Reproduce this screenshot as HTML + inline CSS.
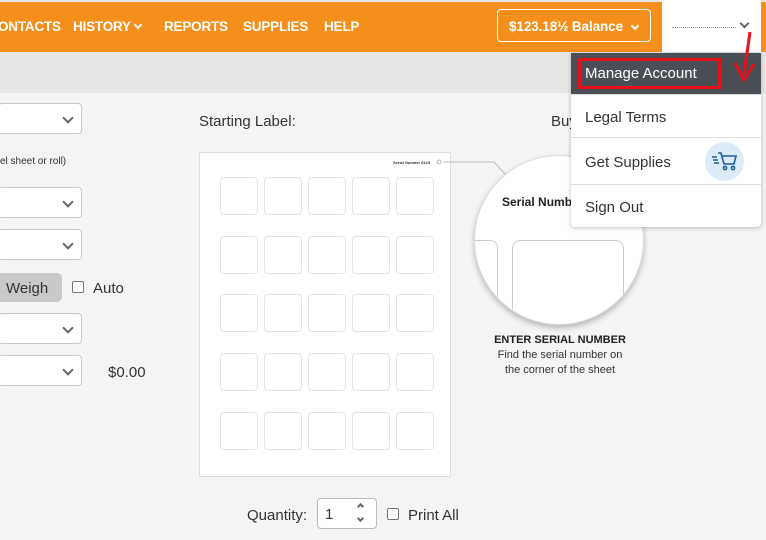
<!DOCTYPE html>
<html><head><meta charset="utf-8"><style>
*{box-sizing:border-box;margin:0;padding:0}
body{width:766px;height:540px;overflow:hidden;background:#f3f4f4;font-family:"Liberation Sans",sans-serif;color:#333;position:relative}
.a{position:absolute}
.top{left:0;top:0;width:766px;height:2px;background:#e5e5e5}
.nav{left:0;top:2px;width:766px;height:50px;background:#f58f1b}
.nt{color:#fff;font-size:13.5px;font-weight:bold;top:19px;letter-spacing:-.2px}
.gray{left:0;top:52px;width:766px;height:41px;background:#e6e6e6}
.sel{background:#fff;border:1px solid #c8c8c8;border-radius:4px;width:84px;height:31px;left:-2px}
.chev{width:8px;height:8px;border-right:2px solid #666;border-bottom:2px solid #666;transform:rotate(45deg)}
.cb{width:12px;height:12px;border:1.5px solid #777;border-radius:2px;background:#fff}
.lab{width:38px;height:38px;border:1px solid #e4e4e4;border-radius:4px;background:#fff}
.menu{left:571px;top:53px;width:190px;height:174px;background:#fff;box-shadow:0 1px 4px rgba(0,0,0,.25);border-radius:0 0 4px 4px}
.mi{left:0;width:190px;font-size:15px;padding-left:14px;border-top:1px solid #ddd}
</style></head><body>
<div class="a top"></div>
<div class="a nav"></div>
<div class="a nt" style="left:-2px">ONTACTS</div>
<div class="a nt" style="left:73px">HISTORY</div>
<div class="a chev" style="left:135px;top:22px;border-color:#fff;width:6px;height:6px"></div>
<div class="a nt" style="left:164px">REPORTS</div>
<div class="a nt" style="left:243px">SUPPLIES</div>
<div class="a nt" style="left:324px">HELP</div>
<div class="a" style="left:497px;top:9px;width:154px;height:33px;border:1px solid #fff;border-radius:4px;color:#fff;font-size:13.5px;font-weight:bold;padding:9px 0 0 11px;white-space:nowrap;letter-spacing:-.1px">$123.18½ Balance</div>
<div class="a chev" style="left:632px;top:23px;border-color:#fff;width:6px;height:6px"></div>
<div class="a" style="left:662px;top:0;width:99px;height:52px;background:#fff"></div>
<div class="a" style="left:672px;top:25px;width:64px;height:3px;border-bottom:1px dotted #999"></div>
<div class="a chev" style="left:741px;top:20px;width:7px;height:7px"></div>
<div class="a gray"></div>

<div class="a sel" style="top:103px"></div><div class="a chev" style="left:64px;top:114px"></div>
<div class="a" style="left:0;top:156px;font-size:10px">el sheet or roll)</div>
<div class="a sel" style="top:187px"></div><div class="a chev" style="left:64px;top:198px"></div>
<div class="a sel" style="top:229px"></div><div class="a chev" style="left:64px;top:240px"></div>
<div class="a" style="left:-10px;top:273px;width:72px;height:29px;background:#c8c8c8;border-radius:5px;font-size:15px;padding:7px 0 0 16px">Weigh</div>
<div class="a cb" style="left:72px;top:281px"></div>
<div class="a" style="left:93px;top:280px;font-size:15px">Auto</div>
<div class="a sel" style="top:313px"></div><div class="a chev" style="left:64px;top:324px"></div>
<div class="a sel" style="top:355px"></div><div class="a chev" style="left:64px;top:366px"></div>
<div class="a" style="left:108px;top:364px;font-size:15px">$0.00</div>

<div class="a" style="left:199px;top:113px;font-size:15px">Starting Label:</div>
<div class="a" style="left:551px;top:113px;font-size:15px">Buy</div>
<div class="a" style="left:199px;top:152px;width:252px;height:325px;background:#fff;border:1px solid #ddd"></div>
<div class="a" style="left:393px;top:160px;font-size:4px;font-weight:bold">Serial Number 8123</div>
<svg class="a" style="left:0;top:0" width="766" height="540"><polyline points="443,162 494,162 506,175" fill="none" stroke="#bbb" stroke-width="1"/><circle cx="439" cy="162" r="2" fill="none" stroke="#bbb"/></svg>
<div class="a" style="left:0;top:0">
<div class="a lab" style="left:220px;top:177px"></div><div class="a lab" style="left:264px;top:177px"></div><div class="a lab" style="left:308px;top:177px"></div><div class="a lab" style="left:352px;top:177px"></div><div class="a lab" style="left:396px;top:177px"></div>
<div class="a lab" style="left:220px;top:236px"></div><div class="a lab" style="left:264px;top:236px"></div><div class="a lab" style="left:308px;top:236px"></div><div class="a lab" style="left:352px;top:236px"></div><div class="a lab" style="left:396px;top:236px"></div>
<div class="a lab" style="left:220px;top:294px"></div><div class="a lab" style="left:264px;top:294px"></div><div class="a lab" style="left:308px;top:294px"></div><div class="a lab" style="left:352px;top:294px"></div><div class="a lab" style="left:396px;top:294px"></div>
<div class="a lab" style="left:220px;top:353px"></div><div class="a lab" style="left:264px;top:353px"></div><div class="a lab" style="left:308px;top:353px"></div><div class="a lab" style="left:352px;top:353px"></div><div class="a lab" style="left:396px;top:353px"></div>
<div class="a lab" style="left:220px;top:412px"></div><div class="a lab" style="left:264px;top:412px"></div><div class="a lab" style="left:308px;top:412px"></div><div class="a lab" style="left:352px;top:412px"></div><div class="a lab" style="left:396px;top:412px"></div>
</div>
<div class="a" style="left:474px;top:155px;width:170px;height:170px;border-radius:50%;background:#fff;border:1px solid #ddd;box-shadow:0 3px 6px rgba(0,0,0,.25);overflow:hidden">
<div class="a" style="left:27px;top:39px;font-size:12px;font-weight:bold;color:#222">Serial Number</div>
<div class="a" style="left:-10px;top:84px;width:33px;height:100px;border:1px solid #ccc;border-radius:8px"></div>
<div class="a" style="left:37px;top:84px;width:112px;height:100px;border:1px solid #ccc;border-radius:8px"></div>
</div>
<div class="a" style="left:474px;top:333px;width:172px;text-align:center;font-size:11px;line-height:15px;color:#333"><b style="color:#222">ENTER SERIAL NUMBER</b><br>Find the serial number on<br>the corner of the sheet</div>

<div class="a menu">
<div class="a" style="left:0;top:0;width:190px;height:41px;background:#4a4f55"></div>
<div class="a" style="left:7px;top:5px;width:143px;height:31px;border:3px solid #e8101a"></div>
<div class="a" style="left:14px;top:12px;color:#fff;font-size:15px">Manage Account</div>
<div class="a mi" style="top:41px;height:43px;padding-top:14px">Legal Terms</div>
<div class="a mi" style="top:84px;height:47px;padding-top:16px">Get Supplies</div>
<div class="a" style="left:134px;top:89px;width:39px;height:39px;border-radius:50%;background:#dcebf7"></div>
<svg class="a" style="left:141px;top:97px" width="26" height="22" viewBox="0 0 26 22" fill="none" stroke="#1f5f9e" stroke-width="1.6"><path d="M6 3h3l3 11h10l2-8H10M0 7h5M1 10h5M2 13h5"/><circle cx="13" cy="18" r="1.6"/><circle cx="21" cy="18" r="1.6"/></svg>
<div class="a mi" style="top:131px;height:43px;padding-top:14px">Sign Out</div>
</div>
<svg class="a" style="left:730px;top:30px" width="30" height="55"><path d="M20 2 L14 44" stroke="#e8101a" stroke-width="3" fill="none"/><path d="M5 33 L14 50 L24 34" stroke="#e8101a" stroke-width="3" fill="none"/></svg>

<div class="a" style="left:247px;top:507px;font-size:15px">Quantity:</div>
<div class="a" style="left:317px;top:498px;width:60px;height:31px;background:#fff;border:1px solid #bbb;border-radius:4px;font-size:15px;padding:7px 0 0 7px">1</div>
<div class="a chev" style="left:358px;top:504px;width:5px;height:5px;transform:rotate(-135deg)"></div>
<div class="a chev" style="left:358px;top:516px;width:5px;height:5px"></div>
<div class="a cb" style="left:387px;top:508px"></div>
<div class="a" style="left:408px;top:507px;font-size:15px">Print All</div>
</body></html>
